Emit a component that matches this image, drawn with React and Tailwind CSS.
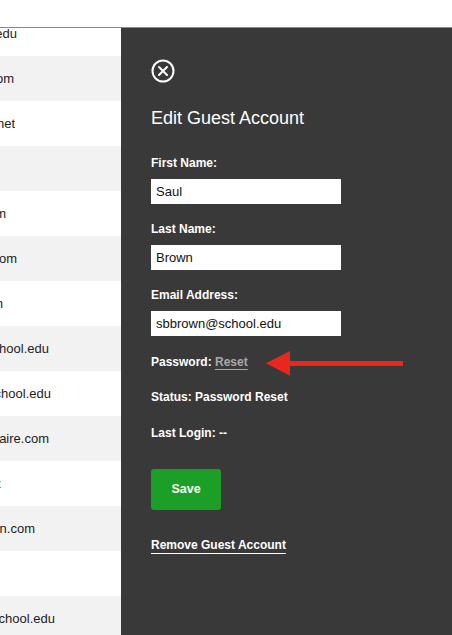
// App.jsx — guest account editor drawer over the guest list

const rows = [
  { text: 'tlee@school.edu', end: 17 },
  { text: 'mjones@gmail.com', end: 14 },
  { text: 'kwhite@comcast.net', end: 15 },
  { text: '', end: 0 },
  { text: 'pgreen@aol.com', end: 6 },
  { text: 'rsmith@yahoo.com', end: 17 },
  { text: 'dclark@msn.com', end: 3 },
  { text: 'jdavis@school.edu', end: 49 },
  { text: 'sbbrown@school.edu', end: 51 },
  { text: 'lmartin@eauclaire.com', end: 49 },
  { text: 'edit', end: 1, link: true },
  { text: 'ahall@brown.com', end: 35 },
  { text: '', end: 0 },
  { text: 'cwilson@school.edu', end: 55 },
]

function CloseIcon() {
  return (
    <svg width="24" height="24" viewBox="0 0 24 24" fill="none" stroke="white" strokeWidth="2" strokeLinecap="round">
      <circle cx="12" cy="12" r="10.5" />
      <path d="M8 8l8 8M16 8l-8 8" />
    </svg>
  )
}

function Field({ label, value, top }) {
  return (
    <>
      <div className={`${top} h-4 leading-4 text-[12px] font-bold text-white`}>{label}</div>
      <div className="mt-2 h-[25px] w-[190px] bg-white px-[5px] flex items-center text-[13px] text-[#111]">{value}</div>
    </>
  )
}

export default function App() {
  return (
    <div className="relative h-[635px] w-[452px] overflow-hidden bg-white flex flex-col" style={{ fontFamily: '"Liberation Sans", Arial, sans-serif' }}>
      {/* Top bar */}
      <div className="h-[28px] shrink-0 bg-white border-b border-[#8a8a8a]" />

      <div className="flex flex-1 min-h-0">
        {/* Guest list, scrolled under the drawer */}
        <div className="w-[121px] shrink-0 overflow-hidden">
          <div className="-mt-[17px]">
            {rows.map((r, i) => (
              <div key={i} className={`h-[45px] flex items-center ${i % 2 === 1 ? 'bg-[#f2f2f2]' : 'bg-white'}`}>
                {r.text && (
                  <div className="overflow-hidden flex justify-end" style={{ width: r.end + 'px' }}>
                    <span className={`shrink-0 whitespace-nowrap text-[13px] ${r.link ? 'text-[#3a8fd8]' : 'text-[#222]'}`}>
                      {r.text}
                    </span>
                  </div>
                )}
              </div>
            ))}
          </div>
        </div>

        {/* Drawer */}
        <div className="flex-1 bg-[#393939] pl-[30px] pt-[31px] flex flex-col items-start">
          <CloseIcon />
          <h2 className="mt-[23px] h-6 leading-6 text-[18px] text-white">Edit Guest Account</h2>

          <Field label="First Name:" value="Saul" top="mt-[25px]" />
          <Field label="Last Name:" value="Brown" top="mt-[17px]" />
          <Field label="Email Address:" value="sbbrown@school.edu" top="mt-[17px]" />

          <div className="mt-[18px] h-4 leading-4 text-[12px] font-bold text-white">
            Password: <span className="text-[#a9a9a9] underline underline-offset-[3px]">Reset</span>
          </div>
          <div className="mt-[19px] h-4 leading-4 text-[12px] font-bold text-white">Status: Password Reset</div>
          <div className="mt-[20px] h-4 leading-4 text-[12px] font-bold text-white">Last Login: --</div>

          <button className="mt-[28px] h-[41px] w-[70px] rounded-[3px] bg-[#1c9f26] text-[12.5px] font-bold text-white">
            Save
          </button>

          <div className="mt-[27px] h-4 leading-4 text-[12px] font-bold text-white underline underline-offset-[4px]">
            Remove Guest Account
          </div>
        </div>
      </div>

      {/* Red annotation arrow */}
      <svg className="absolute left-[264px] top-[350px]" width="142" height="28" viewBox="0 0 142 28">
        <polygon points="2,13.3 26,1 26,25.7" fill="#e8281c" />
        <rect x="24" y="11" width="115" height="5" fill="#e8281c" />
      </svg>
    </div>
  )
}
